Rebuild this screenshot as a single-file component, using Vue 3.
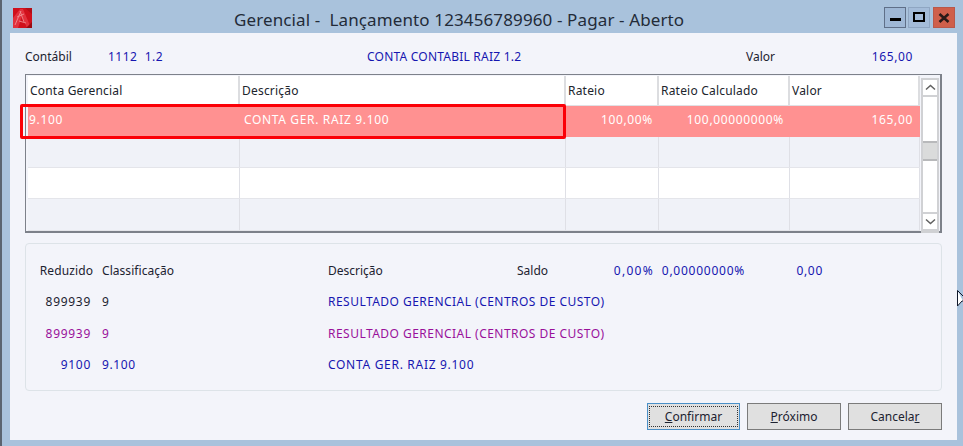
<script setup>
const cols = ['Conta Gerencial', 'Descrição', 'Rateio', 'Rateio Calculado', 'Valor']
const rows = [
  { cls: 'pink', cells: ['9.100', 'CONTA GER. RAIZ 9.100', '100,00%', '100,00000000%', '165,00'] },
  { cls: 'alt', cells: ['', '', '', '', ''] },
  { cls: 'plain', cells: ['', '', '', '', ''] },
  { cls: 'alt last', cells: ['', '', '', '', ''] }
]
const lines = [
  { cls: 'ink top', a: 'Reduzido', b: 'Classificação', c: 'Descrição', d: 'Saldo', e: '0,00%', f: '0,00000000%', g: '0,00' },
  { cls: 'ink', a: '899939', b: '9', c: 'RESULTADO GERENCIAL (CENTROS DE CUSTO)', blueC: true },
  { cls: 'purple', a: '899939', b: '9', c: 'RESULTADO GERENCIAL (CENTROS DE CUSTO)' },
  { cls: 'blue', a: '9100', b: '9.100', c: 'CONTA GER. RAIZ 9.100' }
]
</script>

<template>
  <div class="frame">
    <header class="titlebar">
      <svg class="logo" width="19" height="20" viewBox="0 0 19 20">
        <rect width="19" height="20" fill="#d0101c" />
        <path d="M0 0 H19 V6 L12 0 Z" fill="#b30d16" />
        <path d="M0 20 L0 10 L7 1 L10 1 L18 20 L14 20 L9 8 L5 20 Z" fill="#e2303c" />
        <path d="M2 17 L8 3 M4 9 L11 6 M6 13 L13 15 M7 3 L11 14" stroke="#f08a90" stroke-width="0.9" fill="none" />
        <path d="M13 20 L19 20 L19 14 Z" fill="#9c0b12" />
      </svg>
      <h1 class="title">Gerencial -&nbsp; Lançamento 123456789960 - Pagar - Aberto</h1>
      <div class="winbtns">
        <span class="wb min"><i></i></span>
        <span class="wb max"><i></i></span>
        <span class="wb close">
          <svg width="12" height="10" viewBox="0 0 12 10"><path d="M1.5 1 L10.5 9 M10.5 1 L1.5 9" stroke="#2a1a18" stroke-width="2.6" /></svg>
        </span>
      </div>
    </header>

    <main class="content">
      <div class="info">
        <span class="lbl-cont">Contábil</span>
        <span class="val-code">1112&nbsp; 1.2</span>
        <span class="val-name">CONTA CONTABIL RAIZ 1.2</span>
        <span class="lbl-val">Valor</span>
        <span class="val-num">165,00</span>
      </div>

      <section class="grid">
        <div class="table">
          <div class="row head">
            <div v-for="c in cols" :key="c" class="cell">{{ c }}</div>
          </div>
          <div v-for="(r, i) in rows" :key="i" class="row" :class="r.cls">
            <div v-for="(t, j) in r.cells" :key="j" class="cell" :class="{ right: j > 1 }">{{ t }}</div>
          </div>
        </div>
        <div class="scroll">
          <div class="arrow">
            <svg width="11" height="7" viewBox="0 0 11 7"><path d="M1 5.5 L5.5 1.5 L10 5.5" stroke="#606060" stroke-width="1.5" fill="none" /></svg>
          </div>
          <div class="track"><div class="thumb"></div></div>
          <div class="arrow down">
            <svg width="11" height="7" viewBox="0 0 11 7"><path d="M1 1.5 L5.5 5.5 L10 1.5" stroke="#606060" stroke-width="1.5" fill="none" /></svg>
          </div>
        </div>
        <div class="highlight"></div>
      </section>

      <section class="group">
        <div v-for="(l, i) in lines" :key="i" class="line" :class="l.cls">
          <span class="c-a">{{ l.a }}</span>
          <span class="c-b">{{ l.b }}</span>
          <span class="c-c" :class="{ bluetext: l.blueC }">{{ l.c }}</span>
          <template v-if="l.d">
            <span class="c-d">{{ l.d }}</span>
            <span class="c-e">{{ l.e }}</span>
            <span class="c-f">{{ l.f }}</span>
            <span class="c-g">{{ l.g }}</span>
          </template>
        </div>
      </section>

      <footer class="actions">
        <button class="btn focus"><span class="focus-in"><u>C</u>onfirmar</span></button>
        <button class="btn"><span><u>P</u>róximo</span></button>
        <button class="btn"><span>Cancela<u>r</u></span></button>
      </footer>
    </main>

    <svg class="cursor" width="6" height="18" viewBox="0 0 6 18">
      <path d="M0.5 0.5 L0.5 16 L5 11 L6 11 M0.5 0.5 L6 6" fill="#fff" stroke="#10182a" stroke-width="1" />
    </svg>
  </div>
</template>

<style>
html, body { margin: 0; padding: 0; background: #a9c2dc; }
</style>

<style scoped>
.frame {
  position: relative;
  width: 963px;
  height: 446px;
  overflow: hidden;
  background: #a9c2dc;
  font-family: "Noto Sans", "Open Sans", sans-serif;
  font-size: 12px;
  color: #1c2230;
  box-sizing: border-box;
}
.frame::before {
  content: "";
  position: absolute;
  left: 0;
  top: 0;
  bottom: 0;
  width: 2px;
  background: #5b6470;
}
.titlebar {
  height: 33px;
  display: flex;
  align-items: center;
  padding: 0 8px 0 13px;
  box-sizing: border-box;
  position: relative;
}
.logo { margin-top: 3px; }
.title {
  position: absolute;
  left: 234px;
  top: 9px;
  margin: 0;
  font-size: 17px;
  font-weight: 400;
  line-height: 22px;
  letter-spacing: 0.12px;
  color: #232b38;
  white-space: nowrap;
}
.winbtns {
  margin-left: auto;
  display: flex;
  gap: 2px;
  margin-top: 2px;
}
.wb {
  width: 22px;
  height: 21px;
  box-sizing: border-box;
  display: flex;
  align-items: center;
  justify-content: center;
  border: 1px solid #8fa6c2;
}
.min { border-color: #5f6f88; background: #9fb8d6; }
.min i { width: 11px; height: 3px; background: #000; margin-top: 4px; }
.max { background: #a4bcd9; }
.max i { width: 8px; height: 6px; border: 2px solid #000; margin-top: -2px; }
.close { margin-left: 1px; background: #cf5f4b; border-color: #b9584a; }

.content {
  margin-left: 10px;
  width: 947px;
  height: 407px;
  background: #f3f4fa;
  box-sizing: border-box;
  padding: 0 15px;
  display: flex;
  flex-direction: column;
}
.info {
  height: 41px;
  display: flex;
  align-items: center;
  padding-top: 5px;
  box-sizing: border-box;
  white-space: nowrap;
}
.lbl-cont { width: 83px; }
.val-code { width: 259px; color: #1616b0; letter-spacing: 0.5px; }
.val-name { width: 379px; color: #1616b0; letter-spacing: 0.22px; }
.lbl-val { width: 100px; }
.val-num { width: 67px; text-align: right; color: #1616b0; letter-spacing: 0.6px; }

.grid {
  position: relative;
  display: flex;
  width: 917px;
  height: 159px;
  border: 1px solid #7d818a;
  border-width: 1px 2px 2px 1px;
  box-sizing: border-box;
  background: #f3f4fa;
  padding: 1px 1px 0 2px;
}
.table { width: 892px; }
.row {
  display: grid;
  grid-template-columns: 212px 326px 93px 131px 130px;
  height: 31px;
}
.head { background: #fff; border-bottom: 1px solid #e0e0e4; box-sizing: border-box; height: 30px; }
.head .cell { line-height: 29px; padding-left: 2px; border-right: 2px solid #dcdde0; color: #20242c; letter-spacing: 0.2px; }
.cell {
  box-sizing: border-box;
  border-right: 1px solid #dfe0e6;
  line-height: 27px;
  padding: 0 5px 0 1px;
  white-space: nowrap;
  overflow: hidden;
  letter-spacing: 0.65px;
}
.cell.right { text-align: right; }
.cell:last-child { padding-right: 6px; }
.pink { background: #ff9191; color: #fff; }
.pink .cell { border-right-color: transparent; }
.pink .cell:nth-child(2) { padding-left: 4px; }
.alt { background: #f0f2f8; border-bottom: 1px solid #e4e5ea; box-sizing: border-box; }
.plain { background: #fff; border-bottom: 1px solid #e4e5ea; box-sizing: border-box; }
.last { height: 32px; }

.scroll {
  width: 20px;
  margin-left: 1px;
  height: 155px;
  display: flex;
  flex-direction: column;
  background: #fff;
  border: 2px solid #d0d1d4;
  border-width: 0 2px 2px 2px;
  box-sizing: border-box;
  margin-top: 2px;
}
.arrow {
  height: 19px;
  flex: none;
  display: flex;
  align-items: center;
  justify-content: center;
  border: solid #d0d1d4;
  border-width: 2px 0;
  box-sizing: border-box;
}
.track { flex: 1; padding-top: 44px; }
.thumb {
  height: 20px;
  background: #dadbdb;
  border: solid #b8b9bb;
  border-width: 2px 0;
  box-sizing: border-box;
}
.highlight {
  position: absolute;
  left: -6px;
  top: 29px;
  width: 546px;
  height: 35px;
  border: 3px solid #fb0007;
  border-radius: 2px;
  box-sizing: border-box;
}

.group {
  margin-top: 10px;
  width: 917px;
  height: 148px;
  box-sizing: border-box;
  border: 1px solid #dde3e8;
  border-radius: 4px;
  padding-top: 11px;
}
.line {
  height: 31.33px;
  display: flex;
  align-items: center;
  white-space: nowrap;
}
.ink { color: #1c2230; }
.purple { color: #99119a; }
.blue { color: #1616b0; }
.bluetext { color: #1616b0; }
.c-a { width: 67px; box-sizing: border-box; text-align: right; padding-right: 2px; letter-spacing: 0.7px; }
.c-b { width: 226px; margin-left: 9px; letter-spacing: 0.6px; }
.c-c { width: 189px; letter-spacing: 0.47px; }
.c-d { width: 70px; }
.c-e { width: 67px; text-align: right; color: #1616b0; letter-spacing: 1.3px; }
.c-f { width: 91px; text-align: right; color: #1616b0; letter-spacing: 0.75px; }
.c-g { width: 78px; text-align: right; color: #1616b0; letter-spacing: 0.7px; }
.top .c-a { padding-right: 0; letter-spacing: 0.1px; }
.top .c-b { letter-spacing: 0.05px; }
.top .c-c { letter-spacing: 0; }
.blue .c-c { letter-spacing: 0.7px; }

.actions {
  margin-top: 12px;
  width: 917px;
  display: flex;
  justify-content: flex-end;
  gap: 7px;
}
.btn {
  width: 94px;
  height: 27px;
  padding: 2px;
  border: 1px solid #7b7b7b;
  background: #e0e0e0;
  font: inherit;
  color: #1c2230;
  box-sizing: border-box;
}
.btn span { display: block; line-height: 19px; }
.focus { width: 93px; border-color: #4a90c8; }
.focus-in { outline: 1px dotted #333; }
.cursor { position: absolute; left: 957px; top: 290px; }
</style>
